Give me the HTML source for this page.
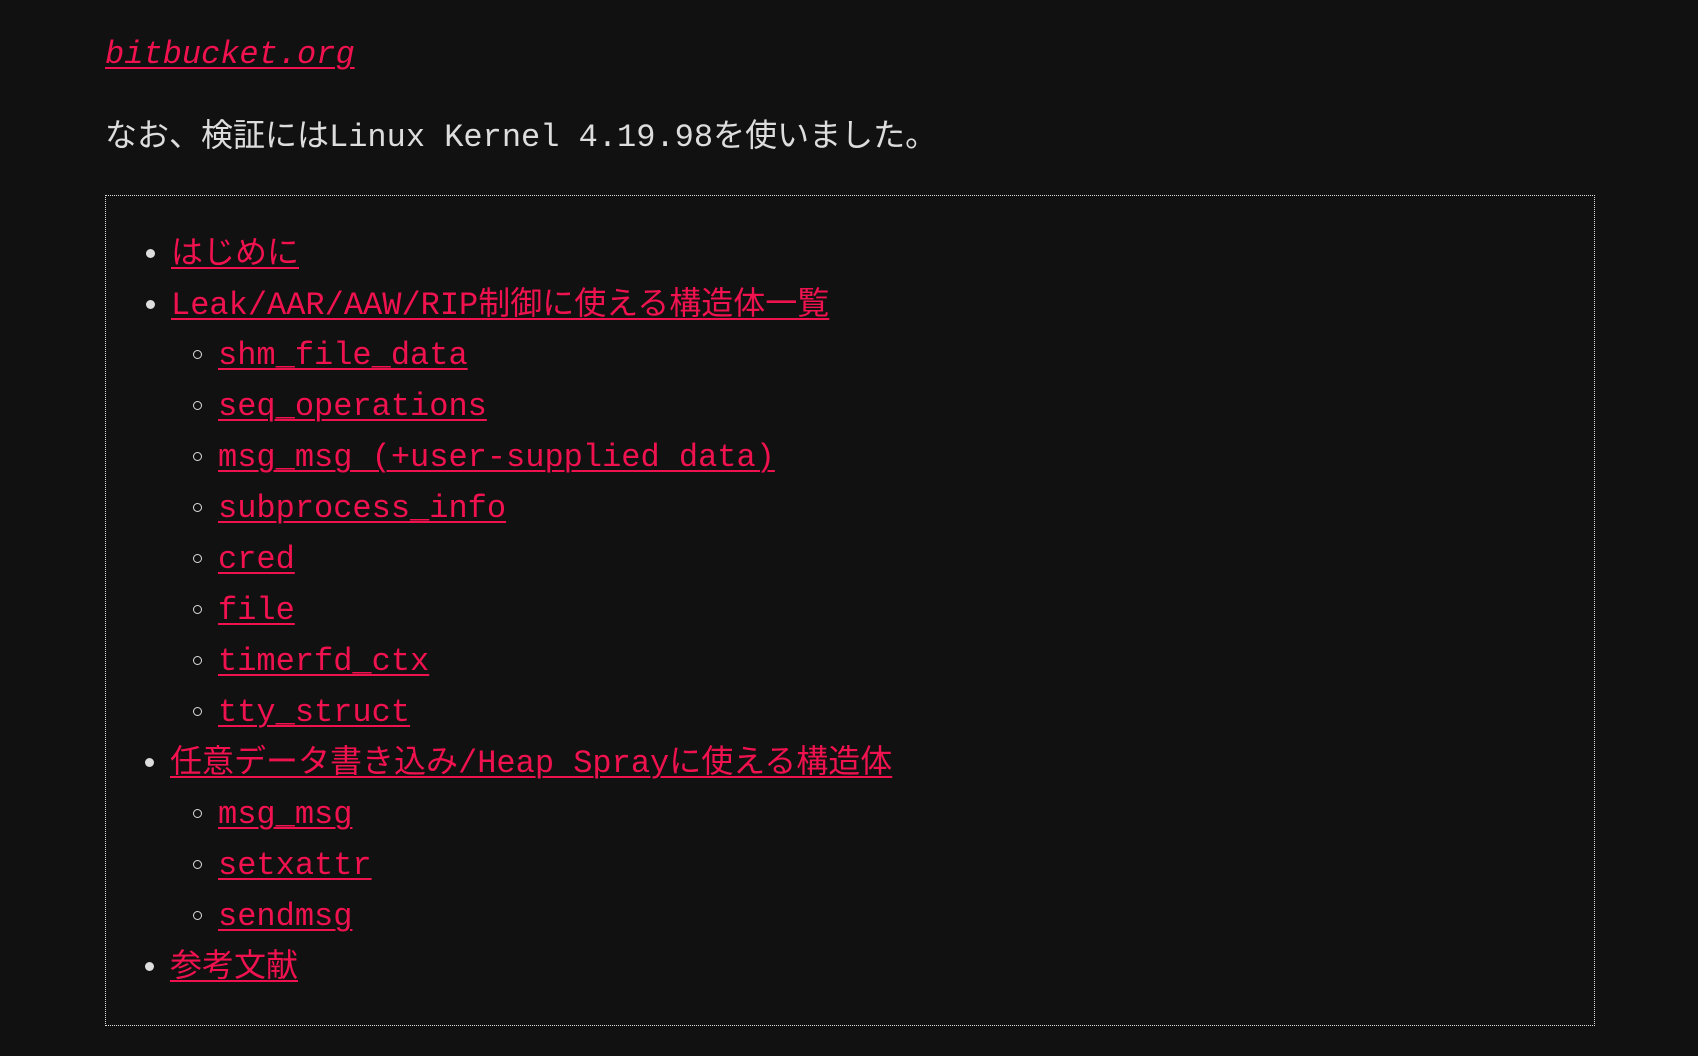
<!DOCTYPE html>
<html><head><meta charset="utf-8"><style>
html,body{margin:0;padding:0;background:#111;width:1698px;height:1056px;overflow:hidden}
body{font-family:"Liberation Mono","Noto Sans CJK JP",monospace;font-size:32px;color:#ddd;line-height:51px}
a{color:#f0124f;text-decoration:underline;text-decoration-thickness:2px;text-underline-offset:4px}
.l1{position:absolute;left:105px;top:29px;font-style:italic}
.p{position:absolute;left:105px;top:112px;margin:0;font-family:"Liberation Mono","Noto Sans CJK JP",monospace}
.box{position:absolute;left:105px;top:195px;width:1490px;height:831px;border:1.5px dotted #ddd;box-sizing:border-box}
ul{margin:0;padding:0;list-style:none}
.box>ul{position:absolute;top:33px;left:0}
li{position:relative;padding-left:65px}
li.t::before{content:"";position:absolute;left:40px;top:20px;width:9px;height:9px;border-radius:50%;background:#ddd}
ul ul li{padding-left:113px}
ul ul li::before{content:"";position:absolute;left:88px;top:20px;width:7px;height:7px;border-radius:50%;border:1.5px solid #ddd}
</style></head><body>
<a class="l1">bitbucket.org</a>
<p class="p">なお、検証にはLinux Kernel 4.19.98を使いました。</p>
<div class="box"><ul>
<li class="t"><a>はじめに</a></li>
<li class="t"><a>Leak/AAR/AAW/RIP制御に使える構造体一覧</a></li>
</ul></div>
<div class="box" style="border:none"><ul style="top:135px">
<li style="padding-left:0"><ul>
<li><a>shm_file_data</a></li>
<li><a>seq_operations</a></li>
<li><a>msg_msg (+user-supplied data)</a></li>
<li><a>subprocess_info</a></li>
<li><a>cred</a></li>
<li><a>file</a></li>
<li><a>timerfd_ctx</a></li>
<li><a>tty_struct</a></li>
</ul></li>
<li class="t"><a>任意データ書き込み/Heap Sprayに使える構造体</a></li>
<li style="padding-left:0"><ul>
<li><a>msg_msg</a></li>
<li><a>setxattr</a></li>
<li><a>sendmsg</a></li>
</ul></li>
<li class="t"><a>参考文献</a></li>
</ul></div>
</body></html>
